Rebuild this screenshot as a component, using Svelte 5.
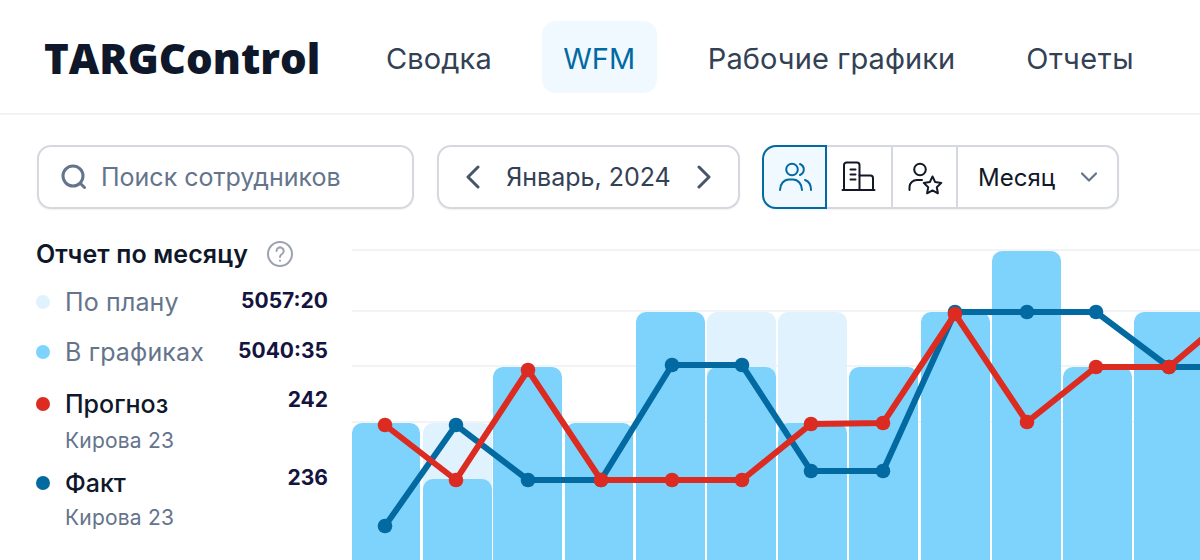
<script>
	const base = 560;
	const bars = [
		{x: 352, w: 68, top: 423},
		{x: 423, w: 69, top: 479, plan: 423},
		{x: 493, w: 69, top: 367},
		{x: 565, w: 68, top: 423},
		{x: 636, w: 69, top: 312},
		{x: 707, w: 69, top: 367, plan: 312},
		{x: 778, w: 69, top: 423, plan: 312},
		{x: 849, w: 69, top: 367},
		{x: 921, w: 69, top: 312},
		{x: 992, w: 69, top: 251},
		{x: 1063, w: 69, top: 367},
		{x: 1134, w: 80, top: 312}
	];
	const gridY = [250, 311, 366, 422];
	const forecast = [[385,425],[456,480],[528,370],[601,480],[672,480],[742,480],[811,424],[883,423],[955,314],[1027,422],[1096,367],[1169,367],[1215,328]];
	const fact = [[385,526],[456,425],[528,480],[601,480],[672,365],[742,365],[811,471],[883,471],[955,312],[1027,312],[1096,312],[1169,367],[1215,367]];

	function barPath(x, w, top)
		{
		return `M${x} ${base}V${top+10}a10 10 0 0 1 10-10H${x+w-10}a10 10 0 0 1 10 10V${base}Z`;
		}
	function pts(list)
		{
		return list.map(p => p.join(',')).join(' ');
		}
	const nav = ['Сводка', 'WFM', 'Рабочие графики', 'Отчеты'];
	const legend = [
		{name: 'По плану', val: '5057:20', color: '#e0f2fe', cls: 'plan'},
		{name: 'В графиках', val: '5040:35', color: '#7dd3fc', cls: 'sched'},
		{name: 'Прогноз', val: '242', color: '#dc2b20', cls: 'fc', sub: 'Кирова 23'},
		{name: 'Факт', val: '236', color: '#0369a1', cls: 'ft', sub: 'Кирова 23'}
	];
</script>

<style>
	:global(body){
		margin: 0;
		background: #fff;
	}
	.page{
		width: 1200px;
		height: 560px;
		overflow: hidden;
		font-family: Inter, "Noto Sans", sans-serif;
		color: #0f172a;
		position: relative;
	}
	header{
		height: 113px;
		display: flex;
		align-items: center;
		padding: 0 0 0 44px;
		border-bottom: 2px solid #f1f2f4;
		box-sizing: content-box;
	}
	.logo{
		font-family: "Open Sans", sans-serif;
		font-size: 42px;
		font-weight: 800;
		padding-top: 2px;
		width: 298px;
		color: #0f172a;
		white-space: nowrap;
	}
	nav{
		display: flex;
		align-items: center;
	}
	nav a{
		font-size: 29px;
		letter-spacing: .1px;
		color: #334155;
		height: 72px;
		line-height: 75px;
		white-space: nowrap;
	}
	nav a:nth-child(1){ margin-left: 44px; margin-right: 50px; }
	nav a:nth-child(2){
		box-sizing: border-box;
		width: 115px;
		text-align: center;
		border-radius: 14px;
		background: #f0f9ff;
		color: #0369a1;
		margin-right: 51px;
	}
	nav a:nth-child(3){ margin-right: 71px; }
	nav a:nth-child(4){ letter-spacing: .5px; }
	.tools{
		display: flex;
		gap: 23px;
		padding: 30px 0 0 37px;
		height: 64px;
	}
	.box{
		box-sizing: border-box;
		height: 64px;
		border: 2px solid #d5d8de;
		border-radius: 14px;
		background: #fff;
		display: flex;
		align-items: center;
		box-shadow: 0 1px 2px rgba(15,23,42,.06);
	}
	.search{
		width: 377px;
		padding-left: 20px;
		gap: 12px;
		font-size: 25px;
		color: #64748b;
	}
	.date{
		width: 303px;
		justify-content: space-between;
		padding: 0 26px;
		font-size: 25px;
		color: #334155;
	}
	.group{
		width: 357px;
		margin-left: -1px;
	}
	.seg{
		box-sizing: border-box;
		width: 65px;
		height: 60px;
		display: flex;
		align-items: center;
		justify-content: center;
		border-right: 2px solid #d5d8de;
		color: #111827;
	}
	.seg.wide{
		width: 66px;
	}
	.seg.active{
		height: 64px;
		margin: -2px 0 -2px -2px;
		border: 2px solid #0369a1;
		border-radius: 14px 0 0 14px;
		background: #f0f9ff;
		color: #0369a1;
	}
	.month{
		flex: 1;
		display: flex;
		align-items: center;
		justify-content: space-between;
		padding: 0 19px 0 20px;
		font-size: 24px;
		color: #111827;
	}
	.body{
		padding: 30px 0 0 36px;
	}
	.side{
		width: 292px;
	}
	h2{
		margin: 0;
		font-size: 25px;
		font-weight: 600;
		letter-spacing: .1px;
		line-height: 30px;
		height: 30px;
		display: flex;
		align-items: center;
		gap: 18px;
		color: #0f172a;
	}
	.row{
		display: grid;
		grid-template-columns: 29px 1fr auto;
		align-items: start;
		font-size: 25px;
		line-height: 30px;
	}
	.row.plan{ margin-top: 18px; }
	.row.sched{ margin-top: 20px; }
	.row.fc{ margin-top: 22px; }
	.row.ft{ margin-top: 14px; }
	.dot{
		width: 14px;
		height: 14px;
		border-radius: 50%;
		margin-top: 8px;
	}
	.name{
		color: #64748b;
		letter-spacing: .15px;
		white-space: nowrap;
	}
	.fc .name, .ft .name{
		color: #0f172a;
		font-weight: 500;
		letter-spacing: 0;
	}
	.val{
		font-size: 21px;
		font-weight: 700;
		color: #14143f;
		line-height: 28px;
	}
	.fc .val{
		margin-top: -3px;
	}
	.ft .val{
		margin-top: -4px;
	}
	.sub{
		grid-column: 2 / 4;
		font-size: 21px;
		letter-spacing: .2px;
		line-height: 26px;
		color: #64748b;
		margin-top: 9px;
	}
	.ft .sub{ margin-top: 7px; }
	.chart{
		position: absolute;
		left: 0;
		top: 0;
		pointer-events: none;
	}
</style>

<div class="page">
	<header>
		<div class="logo">TARGControl</div>
		<nav>
			{#each nav as item}
				<a>{item}</a>
			{/each}
		</nav>
	</header>

	<div class="tools">
		<div class="box search">
			<svg width="30" height="30" viewBox="0 0 30 30" fill="none" stroke="#64748b" stroke-width="3" stroke-linecap="round">
				<circle cx="14" cy="14" r="10"/>
				<path d="M21.500 21.500l4 4"/>
			</svg>
			<span>Поиск сотрудников</span>
		</div>
		<div class="box date">
			<svg width="16" height="24" viewBox="0 0 16 24" fill="none" stroke="#475569" stroke-width="3" stroke-linecap="round" stroke-linejoin="round"><path d="M13 2L3 12l10 10"/></svg>
			<span>Январь, 2024</span>
			<svg width="16" height="24" viewBox="0 0 16 24" fill="none" stroke="#475569" stroke-width="3" stroke-linecap="round" stroke-linejoin="round"><path d="M3 2l10 10L3 22"/></svg>
		</div>
		<div class="box group">
			<div class="seg active">
				<svg width="36" height="36" viewBox="0 0 36 36" fill="none" stroke="currentColor" stroke-width="2" stroke-linecap="round">
					<circle cx="15" cy="10.5" r="5.8"/>
					<path d="M23 5c2.6 1.2 3.8 3.4 3.8 5.5s-1.2 4.2-3.8 5.5"/>
					<path d="M3 31c0-6 4-10.500 9-10.500h4c5 0 9 4.500 9 10.500"/>
					<path d="M28 21c3.500 1.200 6 5 6 10"/>
				</svg>
			</div>
			<div class="seg wide">
				<svg width="36" height="36" viewBox="0 0 36 36" fill="none" stroke="currentColor" stroke-width="2" stroke-linecap="round" stroke-linejoin="round">
					<path d="M3 31V6a2.500 2.500 0 0 1 2.500-2.500h10.500a2.500 2.500 0 0 1 2.500 2.500V31"/>
					<path d="M18.500 16.500h11a2.500 2.500 0 0 1 2.500 2.500V31"/>
					<path d="M1.500 31h32"/>
					<path d="M9.500 10.500h5M9.500 15.500h5M9.500 20.500h5"/>
				</svg>
			</div>
			<div class="seg">
				<svg width="36" height="36" viewBox="0 0 36 36" fill="none" stroke="currentColor" stroke-width="2" stroke-linecap="round" stroke-linejoin="round">
					<circle cx="13" cy="10.500" r="5.800"/>
					<path d="M2.500 31v-3c0-4 3.500-7 7.500-7h5"/>
					<path d="M25.500 17.500l2.700 5.600 6.100.8-4.500 4.300 1.100 6.100-5.400-2.900-5.400 2.900 1.100-6.100-4.500-4.300 6.100-.8z"/>
				</svg>
			</div>
			<div class="month">
				<span>Месяц</span>
				<svg width="18" height="12" viewBox="0 0 18 12" fill="none" stroke="#64748b" stroke-width="2.200" stroke-linecap="round" stroke-linejoin="round"><path d="M2 2.500l7 7 7-7"/></svg>
			</div>
		</div>
	</div>

	<div class="body">
		<div class="side">
			<h2>
				<span>Отчет по месяцу</span>
				<svg width="28" height="28" viewBox="0 0 28 28" fill="none" stroke="#9ca3af" stroke-width="2" stroke-linecap="round">
					<circle cx="14" cy="14" r="12"/>
					<path d="M10.500 11a3.600 3.600 0 1 1 5.600 3c-1.300.8-2.100 1.500-2.100 3"/>
					<path d="M14 20.500v.2"/>
				</svg>
			</h2>
			{#each legend as l}
				<div class="row {l.cls}">
					<span class="dot" style="background: {l.color}"></span>
					<span class="name">{l.name}</span>
					<span class="val">{l.val}</span>
					{#if l.sub}
						<span class="sub">{l.sub}</span>
					{/if}
				</div>
			{/each}
		</div>
	</div>

	<svg class="chart" width="1200" height="560" viewBox="0 0 1200 560" fill="none">
		{#each gridY as y}
			<path d="M352 {y}H1200" stroke="#f1f3f5" stroke-width="2"/>
		{/each}
		{#each bars as b}
			{#if b.plan}
				<path d={barPath(b.x, b.w, b.plan)} fill="#e0f2fe"/>
			{/if}
			<path d={barPath(b.x, b.w, b.top)} fill="#7dd3fc"/>
		{/each}
		<polyline points={pts(fact)} stroke="#0369a1" stroke-width="6"/>
		{#each fact as p}
			<circle cx={p[0]} cy={p[1]} r="7.300" fill="#0369a1"/>
		{/each}
		<polyline points={pts(forecast)} stroke="#dc2b20" stroke-width="6"/>
		{#each forecast as p}
			<circle cx={p[0]} cy={p[1]} r="7.300" fill="#dc2b20"/>
		{/each}
	</svg>
</div>
